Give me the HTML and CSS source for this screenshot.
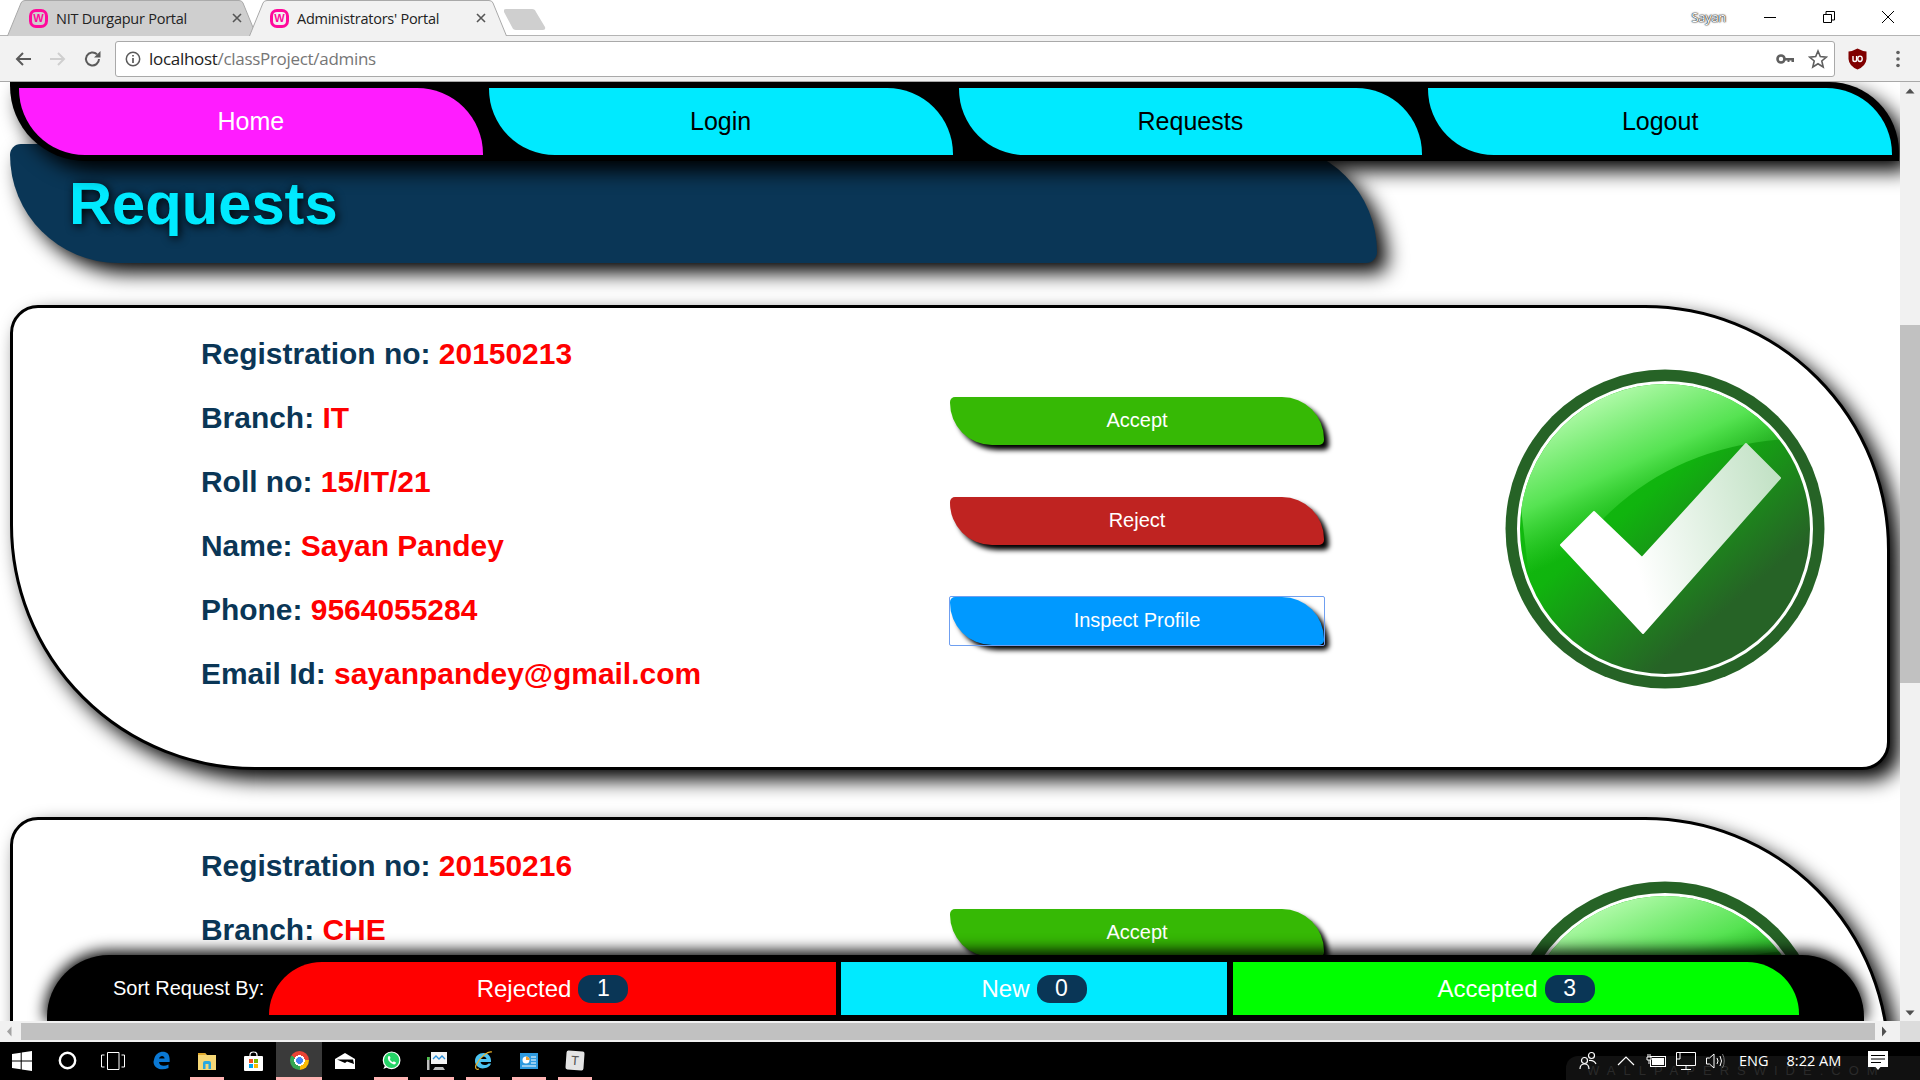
FILE: index.html
```html
<!DOCTYPE html>
<html lang="en">
<head>
    <meta charset="UTF-8">
    <title>Administrators' Portal</title>
    <link rel="stylesheet" href="styles.css">
</head>
<body>
<div class="window">

    <!-- tabs -->
    <div class="tabstrip">
        <div class="tab">
            <svg class="tab-shape" width="250" height="36"><path d="M0.5 36 L14 3 Q15 0.5 18 0.5 H232 Q235 0.5 236 3 L249.5 36" fill="#cfcfcf" stroke="#a9a9a9"/></svg>
            <span class="favicon">W</span>
            <span class="tab-title">NIT Durgapur Portal</span>
            <svg class="tab-close" width="10" height="10"><path d="M1 1 L9 9 M9 1 L1 9" stroke="#555" stroke-width="1.6"/></svg>
        </div>
        <div class="tab tab-active">
            <svg class="tab-shape" width="258" height="36"><path d="M0.5 36 L14 3 Q15 0.5 18 0.5 H240 Q243 0.5 244 3 L257.5 36" fill="#f2f2f2" stroke="#a9a9a9"/></svg>
            <span class="favicon">W</span>
            <span class="tab-title">Administrators' Portal</span>
            <svg class="tab-close" width="10" height="10"><path d="M1 1 L9 9 M9 1 L1 9" stroke="#555" stroke-width="1.6"/></svg>
        </div>
        <svg class="new-tab" width="42" height="22"><path d="M2 0 H28 Q31 0 32 3 L41 18 Q42 21 39 21 H12 Q9 21 8 18 L0 3 Q-1 0 2 0Z" fill="#cfcfcf"/></svg>
        <span class="profile">Sayan</span>
        <div class="win-controls">
            <svg width="14" height="14"><path d="M1 7.5 H13" stroke="#000"/></svg>
            <svg width="14" height="14"><path d="M1.5 4.5 H9.5 V12.5 H1.5Z M4 4 V1.5 H12.5 V10 H10" fill="none" stroke="#000"/></svg>
            <svg width="14" height="14"><path d="M1 1 L13 13 M13 1 L1 13" stroke="#000"/></svg>
        </div>
    </div>

    <!-- toolbar -->
    <div class="toolbar">
        <svg class="tool-icon" width="18" height="18"><path d="M17 9 H3 M9 3 L3 9 L9 15" fill="none" stroke="#5a5a5a" stroke-width="2"/></svg>
        <svg class="tool-icon" width="18" height="18"><path d="M1 9 H15 M9 3 L15 9 L9 15" fill="none" stroke="#cfcfcf" stroke-width="2"/></svg>
        <svg class="tool-icon" width="18" height="18"><path d="M15 9 A6.5 6.5 0 1 1 13 4.3" fill="none" stroke="#5a5a5a" stroke-width="2"/><path d="M16.5 1 V7.5 H10Z" fill="#5a5a5a"/></svg>
        <div class="addressbar">
            <svg width="16" height="16"><circle cx="8" cy="8" r="6.7" fill="none" stroke="#5a5a5a" stroke-width="1.5"/><path d="M8 7 V12 M8 4 V5.6" stroke="#5a5a5a" stroke-width="1.7"/></svg>
            <span class="url"><span class="url-host">localhost</span>/classProject/admins</span>
            <svg class="key-icon" width="18" height="12"><circle cx="5" cy="6" r="3.5" fill="none" stroke="#5f5f5f" stroke-width="2.6"/><path d="M8 5 H18 V9 H15.5 V7.5 H13.5 V9 H11.5 V7.5 H8Z" fill="#5f5f5f"/></svg>
            <svg width="20" height="20"><path d="M10 2 L12.3 7.6 L18.4 8.1 L13.8 12 L15.2 18 L10 14.8 L4.8 18 L6.2 12 L1.6 8.1 L7.7 7.6Z" fill="none" stroke="#5f5f5f" stroke-width="1.6"/></svg>
        </div>
        <svg class="ublock" width="19" height="22"><path d="M9.5 0.5 Q14 3 18.5 3.5 V11 Q18 18 9.5 21.5 Q1 18 0.5 11 V3.5 Q5 3 9.5 0.5Z" fill="#800000"/><path d="M5 8 V12 Q5 13.5 7 13.5 Q8.6 13.5 8.6 12 V8" fill="none" stroke="#fff" stroke-width="1.4"/><ellipse cx="12" cy="10.8" rx="2.2" ry="2.7" fill="none" stroke="#fff" stroke-width="1.4"/></svg>
        <svg class="menu-dots" width="6" height="18"><circle cx="3" cy="2.5" r="1.8" fill="#5f5f5f"/><circle cx="3" cy="9" r="1.8" fill="#5f5f5f"/><circle cx="3" cy="15.5" r="1.8" fill="#5f5f5f"/></svg>
    </div>

    <div class="viewport">
        <div class="page">
            <nav class="topnav">
                <a class="nav-item nav-current">Home</a>
                <a class="nav-item">Login</a>
                <a class="nav-item">Requests</a>
                <a class="nav-item">Logout</a>
            </nav>

            <div class="page-title"><h1>Requests</h1></div>

            <div class="request-card">
                <div class="details">
                    <p>Registration no: <span class="val">20150213</span></p>
                    <p>Branch: <span class="val">IT</span></p>
                    <p>Roll no: <span class="val">15/IT/21</span></p>
                    <p>Name: <span class="val">Sayan Pandey</span></p>
                    <p>Phone: <span class="val">9564055284</span></p>
                    <p>Email Id: <span class="val">sayanpandey@gmail.com</span></p>
                </div>
                <div class="actions">
                    <button class="btn btn-accept">Accept</button>
                    <button class="btn btn-reject">Reject</button>
                    <button class="btn btn-inspect">Inspect Profile</button>
                </div>
                <svg class="status-icon" width="320" height="320" viewBox="0 0 320 320">
                    <defs>
                        <linearGradient id="base" gradientUnits="userSpaceOnUse" x1="70" y1="60" x2="250" y2="270">
                            <stop offset="0" stop-color="#12bd0e"/>
                            <stop offset="0.35" stop-color="#10b40e"/>
                            <stop offset="0.85" stop-color="#266326"/>
                        </linearGradient>
                        <linearGradient id="gloss" gradientUnits="userSpaceOnUse" x1="60" y1="25" x2="121" y2="162">
                            <stop offset="0" stop-color="#c6ffbe"/>
                            <stop offset="0.6" stop-color="#5ee85a" stop-opacity="0.9"/>
                            <stop offset="1" stop-color="#40d83c" stop-opacity="0"/>
                        </linearGradient>
                        <linearGradient id="tick" gradientUnits="userSpaceOnUse" x1="130" y1="190" x2="280" y2="150">
                            <stop offset="0" stop-color="#fff"/>
                            <stop offset="1" stop-color="#c3e2c6"/>
                        </linearGradient>
                        <clipPath id="inner"><circle cx="160" cy="160" r="145"/></clipPath>
                    </defs>
                    <circle cx="160" cy="160" r="159.5" fill="#266326"/>
                    <circle cx="160" cy="160" r="146.5" fill="url(#base)" stroke="#fff" stroke-width="3"/>
                    <path clip-path="url(#inner)" d="M30 260 Q60 190 100 148 Q170 78 280 70 L320 0 L0 0Z" fill="url(#gloss)"/>
                    <path d="M89 143 L137 189 L241 75 L275 109 L138 264 L56 176Z" fill="url(#tick)" stroke="url(#tick)" stroke-width="2" stroke-linejoin="round"/>
                </svg>
            </div>

            <div class="request-card">
                <div class="details">
                    <p>Registration no: <span class="val">20150216</span></p>
                    <p>Branch: <span class="val">CHE</span></p>
                </div>
                <div class="actions">
                    <button class="btn btn-accept">Accept</button>
                </div>
                <svg class="status-icon" width="320" height="320" viewBox="0 0 320 320">
                    <circle cx="160" cy="160" r="159.5" fill="#266326"/>
                    <circle cx="160" cy="160" r="146.5" fill="url(#base)" stroke="#fff" stroke-width="3"/>
                    <path clip-path="url(#inner)" d="M30 260 Q60 190 100 148 Q170 78 280 70 L320 0 L0 0Z" fill="url(#gloss)"/>
                </svg>
            </div>

            <div class="sortbar">
                <span class="sort-label">Sort Request By:</span>
                <a class="sort-btn sort-rejected">Rejected <span class="count">1</span></a>
                <a class="sort-btn sort-new">New <span class="count">0</span></a>
                <a class="sort-btn sort-accepted">Accepted <span class="count">3</span></a>
            </div>
        </div>
        <div class="vscroll">
            <svg width="20" height="16"><path d="M5.5 10.5 L10 5.5 L14.5 10.5Z" fill="#505050"/></svg>
            <div class="vthumb"></div>
            <svg class="vscroll-down" width="20" height="16"><path d="M5.5 5.5 L10 10.5 L14.5 5.5Z" fill="#505050"/></svg>
        </div>
    </div>

    <div class="hscroll">
        <svg width="21" height="17"><path d="M11.5 3.5 L7 8.5 L11.5 13.5Z" fill="#a3a3a3"/></svg>
        <div class="hthumb"></div>
        <svg width="25" height="17"><path d="M7 3.5 L11.5 8.5 L7 13.5Z" fill="#505050"/></svg>
        <div class="scroll-corner"></div>
    </div>

    <!-- windows taskbar -->
    <div class="taskbar">
        <div class="task-slot task-first">
            <svg width="20" height="20"><path d="M0 3 L8.7 1.7 V9.5 H0Z M9.7 1.5 L20 0 V9.5 H9.7Z M0 10.5 H8.7 V18.3 L0 17Z M9.7 10.5 H20 V20 L9.7 18.5Z" fill="#fff"/></svg>
        </div>
        <div class="task-slot">
            <svg width="19" height="19"><circle cx="9.5" cy="9.5" r="7.7" fill="none" stroke="#fff" stroke-width="2.4"/></svg>
        </div>
        <div class="task-slot task-view">
            <svg width="24" height="18"><path d="M6.5 0.5 H18 V17.5 H6.5Z M3.5 3 H0.5 V15 H3.5 M20.5 3 H23.5 V15 H20.5" fill="none" stroke="#fff"/></svg>
        </div>
        <div class="task-slot">
            <svg width="17" height="19"><path d="M1 9 C2 2 8 0 12 1 C16 2 17 6 16.6 11 H6 C6.5 15 11 16 15.5 13.5 V17 C9 20 1 18 0.5 11 C0.6 10 0.8 9.5 1 9Z M6 7.5 H11.6 C11.5 4 6.8 4 6 7.5Z" fill="#0a78d4" fill-rule="evenodd"/></svg>
        </div>
        <div class="task-slot slot-open">
            <svg width="18" height="18"><path d="M0 1 H7 L9 3 H18 V18 H0Z" fill="#f6d776"/><path d="M0 1 H7 L8 3 H0Z" fill="#e0a92c"/><path d="M5 17 V11 Q5 9 7 9 H11 Q13 9 13 11 V17 H10.5 V12 H7.5 V17Z" fill="#29a8e0"/></svg>
        </div>
        <div class="task-slot">
            <svg width="19" height="20"><path d="M6 6 V4 Q6 1 9.5 1 Q13 1 13 4 V6" fill="none" stroke="#fff" stroke-width="1.2"/><rect y="5" width="19" height="15" rx="1" fill="#fff"/><rect x="5" y="8" width="4" height="4" fill="#f25022"/><rect x="10" y="8" width="4" height="4" fill="#7fba00"/><rect x="5" y="13" width="4" height="4" fill="#00a4ef"/><rect x="10" y="13" width="4" height="4" fill="#ffb900"/></svg>
        </div>
        <div class="task-slot slot-open slot-active">
            <span class="chrome-logo"></span>
        </div>
        <div class="task-slot">
            <svg width="20" height="16"><path d="M0 6 L10 0 L20 6 V16 H0Z" fill="#fff"/><path d="M2 6.5 H18 L19 11 L12 8.5 L10 10Z" fill="#000"/></svg>
        </div>
        <div class="task-slot slot-open">
            <svg width="19" height="19"><path d="M9.6 1 A8.3 8.3 0 1 1 3 14.5 L1.3 18 L5 16.5 A8.3 8.3 0 1 0 9.6 1Z" fill="#fff"/><circle cx="9.6" cy="9.3" r="8.3" fill="#25d366" stroke="#fff" stroke-width="1.2"/><path d="M6.5 5 Q5 7 6.5 9.5 Q8.5 12.5 12 13.5 Q13.8 13.5 14 11.5 L11.8 10.3 L10.8 11.3 Q8.5 10.3 7.7 8 L8.6 7 L7.5 5Z" fill="#fff"/></svg>
        </div>
        <div class="task-slot slot-open">
            <svg width="20" height="20"><rect x="4" y="1" width="16" height="12" fill="#f4f4f4"/><path d="M6 8 L9 5 L12 8 L15 5 L18 8" fill="none" stroke="#2a8fd8" stroke-width="1.3"/><rect y="6" width="2.5" height="13" fill="#bdbdbd"/><rect y="6" width="2.5" height="3" fill="#4fc24f"/><path d="M8 16 H16 L18 19 H6Z" fill="#bdbdbd"/></svg>
        </div>
        <div class="task-slot slot-open">
            <svg width="19" height="20"><path d="M1 10 C1 5 5 2 9.5 2 C14.5 2 17.5 6 17 11 H6.5 C7 14.5 12 15 14.5 12.5 H17 C15 18 6 19 3 15 C1.5 13 1 12 1 10Z M6.5 8 H12.5 C12 4.5 7 4.5 6.5 8Z" fill="#4cc4f2" fill-rule="evenodd"/><path d="M18 1 C14 0 6 6 2 14 C1 17 2 19 5 18" fill="none" stroke="#f0b429" stroke-width="1.2"/></svg>
        </div>
        <div class="task-slot slot-open">
            <svg width="18" height="16"><rect width="18" height="16" fill="#2f9be0"/><circle cx="6" cy="7" r="3.5" fill="#fff"/><path d="M6 7 V3.5 A3.5 3.5 0 0 1 9.5 7Z" fill="#f0a030"/><path d="M11 4 H16 M11 7 H16 M11 10 H16 M2 13 H16" stroke="#fff"/></svg>
        </div>
        <div class="task-slot slot-open">
            <span class="text-app">T</span>
        </div>

        <div class="tray-mark"><span>WALLPAPERSWIDE.COM</span></div>

        <div class="tray">
            <svg width="18" height="19"><circle cx="12.5" cy="4.5" r="3" fill="none" stroke="#fff" stroke-width="1.2"/><circle cx="5.5" cy="9.5" r="3" fill="none" stroke="#fff" stroke-width="1.2"/><path d="M1 18 Q1 13 5.5 13 Q10 13 10 18 M10 9.5 Q15 9 17 13" fill="none" stroke="#fff" stroke-width="1.2"/></svg>
            <svg class="tray-caret" width="18" height="10"><path d="M1 9 L9 1 L17 9" fill="none" stroke="#fff" stroke-width="1.2"/></svg>
            <svg class="tray-battery" width="20" height="14"><rect x="4.5" y="2.5" width="15" height="10" fill="none" stroke="#fff"/><rect x="6" y="4" width="12" height="7" fill="#fff"/><path d="M2 0 V3 M4 0 V3 M1 3 H5 V6 H1Z M3 6 V10" stroke="#fff"/></svg>
            <svg class="tray-net" width="21" height="20"><path d="M5 1.5 H20.5 V14.5 H1.5 M1.5 14.5 V1.5 H5 V8 H1.5 M11 14.5 V18.5 M6 18.5 H16" fill="none" stroke="#fff"/></svg>
            <svg class="tray-vol" width="19" height="18"><path d="M0.5 6 H3.5 L8 2 V16 L3.5 12 H0.5Z" fill="none" stroke="#fff"/><path d="M11 6 Q13 9 11 12 M14 4 Q17 9 14 14" fill="none" stroke="#fff"/><path d="M16.5 2 Q20 9 16.5 16" fill="none" stroke="#777"/></svg>
            <span class="tray-lang">ENG</span>
            <span class="tray-time">8:22 AM</span>
            <svg class="tray-notes" width="20" height="20"><path d="M0 0 H20 V16 H12.5 L10 19 L7.5 16 H0Z" fill="#fff"/><path d="M3 4.5 H17 M3 8 H17 M3 11.5 H13" stroke="#000"/></svg>
        </div>
    </div>
</div>
</body>
</html>
```

FILE: styles.css
```css
* {
    box-sizing: border-box;
}

body {
    margin: 0;
    font-family: "Liberation Sans", Arial, sans-serif;
    background: #fff;
}

.window {
    display: flex;
    flex-direction: column;
    height: 1080px;
    width: 1920px;
    overflow: hidden;
}

/* tabs */
.tabstrip {
    display: flex;
    align-items: flex-start;
    height: 36px;
    padding-left: 7px;
    background: #fff;
    border-bottom: 1px solid #b4b4b4;
    font-family: "Open Sans", sans-serif;
}

.tab {
    position: relative;
    display: flex;
    align-items: center;
    width: 250px;
    height: 36px;
    padding: 0 15px 0 22px;
    font-size: 14.5px;
    color: #222;
}

.tab-active {
    width: 258px;
    margin-left: -8px;
    padding: 0 21px 0 21px;
}

.tab-shape {
    position: absolute;
    left: 0;
    top: 0;
}

.favicon {
    position: relative;
    width: 19px;
    height: 19px;
    border: 3px solid #ff0a9c;
    border-radius: 7px;
    color: #ff0a9c;
    font: bold 11px/13px "Liberation Sans", sans-serif;
    text-align: center;
}

.tab-title {
    position: relative;
    flex: 1;
    margin-left: 8px;
    letter-spacing: -0.25px;
}

.tab-close {
    position: relative;
}

.new-tab {
    margin: 9px 0 0 -3px;
}

.profile {
    margin: 8px 0 0 auto;
    font-size: 13px;
    color: #fff;
    letter-spacing: -0.3px;
    text-shadow: 0 0 2px #222, 0 0 1px #222, 0 0 1px #222;
}

.win-controls {
    display: flex;
    gap: 45px;
    margin: 10px 25px 0 37px;
}

/* toolbar */
.toolbar {
    display: flex;
    align-items: center;
    height: 46px;
    padding-left: 14px;
    background: #f2f2f2;
    border-bottom: 1px solid #a8a8a8;
}

.tool-icon {
    margin-right: 17px;
}

.addressbar {
    display: flex;
    align-items: center;
    gap: 8px;
    width: 1720px;
    height: 36px;
    margin-left: -4px;
    padding: 0 6px 0 9px;
    background: #fff;
    border: 1px solid #a9a9a9;
    border-radius: 3px;
}

.url {
    flex: 1;
    font: 17px "Open Sans", sans-serif;
    letter-spacing: -0.3px;
    color: #767676;
}

.url-host {
    color: #222;
}

.key-icon {
    margin-right: 6px;
}

.ublock {
    margin-left: 13px;
}

.menu-dots {
    margin-left: 28px;
}

/* page */
.viewport {
    display: flex;
    flex: 1;
    min-height: 0;
}

.page {
    position: relative;
    flex: 1;
    overflow: hidden;
    background: #fff;
}

.topnav {
    position: relative;
    z-index: 2;
    display: flex;
    gap: 6px;
    height: 79px;
    margin: 0 1px 0 10px;
    padding: 6px 7px 0 9px;
    background: #000;
    border-radius: 0 70px 0 75px;
    box-shadow: 10px 10px 20px #000;
}

.nav-item {
    flex: 1;
    height: 67px;
    background: #00eaff;
    border-radius: 0 66px 0 66px;
    color: #000;
    font-size: 25px;
    line-height: 67px;
    text-align: center;
}

.nav-current {
    background: #ff1cff;
    color: #fff;
}

.page-title {
    display: flex;
    align-items: center;
    width: 1367px;
    height: 119px;
    margin: -17px 0 42px 10px;
    padding: 0 0 1px 59px;
    background: #0a3656;
    border-radius: 12px 120px 12px 120px;
    box-shadow: 10px 10px 20px #000;
}

.page-title h1 {
    margin: 0;
    font-size: 59.7px;
    color: #00eaff;
    text-shadow: 2px 2px 10px #000;
}

.request-card {
    display: flex;
    align-items: flex-start;
    height: 465px;
    width: 1880px;
    margin: 0 0 47px 10px;
    padding-left: 188px;
    background: #fff;
    border: 3px solid #000;
    border-radius: 28px 245px 28px 245px;
    box-shadow: 10px 10px 20px #000;
}

.details {
    width: 749px;
    padding-top: 14px;
    color: #0a3656;
    font-size: 29.95px;
    font-weight: bold;
}

.details p {
    margin: 0;
    line-height: 64px;
}

.val {
    color: #f00;
}

.actions {
    display: flex;
    flex-direction: column;
    gap: 52px;
    width: 374px;
    margin-top: 89px;
}

.btn {
    height: 48px;
    padding: 0 0 2px;
    border: none;
    border-radius: 5px 42px 5px 42px;
    color: #fff;
    font: 20px "Liberation Sans", sans-serif;
    box-shadow: 5px 5px 5px #000;
}

.btn-accept {
    background: #36b905;
}

.btn-reject {
    background: #bf2321;
}

.btn-inspect {
    position: relative;
    background: #0099ff;
}

/* focus ring, square even though the button is not */
.btn-inspect::after {
    content: "";
    position: absolute;
    left: -1px;
    top: -1px;
    right: -1px;
    bottom: -1px;
    border: 1px solid #6f9ff0;
    border-radius: 2px;
}

.status-icon {
    flex-shrink: 0;
    margin: 61px 0 0 181px;
}

/* sort bar sits on top of the scrolling cards */
.sortbar {
    position: absolute;
    left: 47px;
    bottom: 0;
    z-index: 3;
    display: flex;
    width: 1817px;
    height: 66px;
    padding: 7px 0 6px 66px;
    background: #000;
    border-radius: 62px 62px 0 0;
    box-shadow: 0 -2px 15px 2px #000;
}

.sort-label {
    width: 156px;
    color: #fff;
    font-size: 20px;
    line-height: 52px;
}

.sort-btn {
    display: flex;
    align-items: center;
    justify-content: center;
    gap: 7px;
    height: 53px;
    color: #fff;
    font-size: 24px;
}

.sort-rejected {
    width: 567px;
    margin-right: 5px;
    background: #f00;
    border-radius: 72px 0 0 0;
}

.sort-new {
    width: 386px;
    margin-right: 6px;
    background: #00eaff;
}

.sort-accepted {
    width: 566px;
    background: #0f0;
    border-radius: 0 52px 0 0;
}

.count {
    width: 50px;
    height: 28px;
    background: #0a3656;
    border-radius: 13px;
    font-size: 23px;
    line-height: 27px;
    text-align: center;
}

/* scrollbars */
.vscroll {
    display: flex;
    flex-direction: column;
    width: 20px;
    padding-top: 1px;
    background: #f1f1f1;
}

.vthumb {
    width: 20px;
    height: 358px;
    margin-top: 226px;
    background: #c1c1c1;
}

.vscroll-down {
    margin-top: auto;
}

.hscroll {
    display: flex;
    align-items: center;
    height: 21px;
    background: #f1f1f1;
}

.hthumb {
    width: 1854px;
    height: 17px;
    background: #c1c1c1;
}

.scroll-corner {
    width: 20px;
    height: 21px;
    background: #dcdcdc;
}

/* taskbar */
.taskbar {
    position: relative;
    display: flex;
    height: 38px;
    background: #000;
}

.task-slot {
    position: relative;
    display: flex;
    align-items: center;
    justify-content: center;
    width: 46px;
    height: 38px;
    padding-bottom: 1px;
}

.task-first {
    width: 44px;
}

.task-view {
    margin-right: 2px;
}

.slot-open::after {
    content: "";
    position: absolute;
    left: 6px;
    right: 6px;
    bottom: 0;
    height: 3px;
    background: #ffb3b3;
}

.slot-active {
    background: #3a3a3a;
}

.slot-active::after {
    left: 0;
    right: 0;
}

.chrome-logo {
    width: 19px;
    height: 19px;
    border-radius: 50%;
    background:
        radial-gradient(circle, #4285f4 0 26%, #fff 27% 38%, transparent 39%),
        conic-gradient(from -60deg, #ea4335 0 150deg, #fbbc05 150deg 240deg, #34a853 240deg 360deg);
}

.text-app {
    width: 18px;
    height: 19px;
    background: #e4e4e4;
    border-radius: 2px;
    color: #555;
    font-size: 13px;
    line-height: 19px;
    text-align: center;
    transform: rotate(4deg);
}

.tray-mark {
    position: absolute;
    left: 1566px;
    top: 14px;
    right: 0;
    bottom: 0;
    overflow: hidden;
    padding: 8px 0 0 21px;
    background: #111;
    border-radius: 12px 0 0 0;
    color: #2a2a2a;
    font-size: 13px;
    line-height: 14px;
    letter-spacing: 8px;
    white-space: nowrap;
}

.tray {
    position: absolute;
    left: 1579px;
    top: 0;
    bottom: 0;
    display: flex;
    align-items: center;
    padding-bottom: 1px;
    color: #fff;
    font: 14.5px "Open Sans", sans-serif;
}

.tray-caret {
    margin-left: 20px;
}

.tray-battery {
    margin-left: 11px;
}

.tray-net {
    margin-left: 9px;
}

.tray-vol {
    margin-left: 10px;
}

.tray-lang {
    margin-left: 14px;
}

.tray-time {
    margin-left: 18px;
}

.tray-notes {
    margin-left: 27px;
}
```
